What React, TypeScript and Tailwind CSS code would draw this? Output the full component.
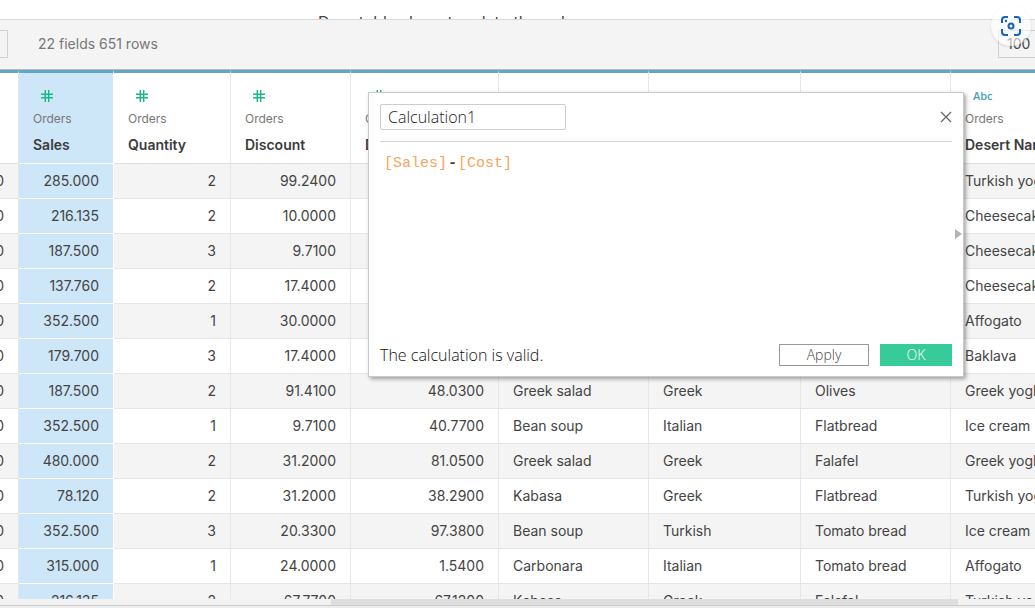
import React from "react";

type Column = { source: string; name: string; kind: "number" | "text" | "none"; width: string };

const columns: Column[] = [
  { source: "", name: "", kind: "none", width: "w-[51px]" },
  { source: "Orders", name: "Sales", kind: "number", width: "w-[95px]" },
  { source: "Orders", name: "Quantity", kind: "number", width: "w-[117px]" },
  { source: "Orders", name: "Discount", kind: "number", width: "w-[120px]" },
  { source: "Orders", name: "D", kind: "number", width: "w-[148px]" },
  { source: "", name: "", kind: "none", width: "w-[150px]" },
  { source: "", name: "", kind: "none", width: "w-[152px]" },
  { source: "", name: "", kind: "none", width: "w-[150px]" },
  { source: "Orders", name: "Desert Name", kind: "text", width: "w-[150px]" },
];

const rows: string[][] = [
  ["0", "285.000", "2", "99.2400", "", "", "", "", "Turkish yoghurt"],
  ["0", "216.135", "2", "10.0000", "", "", "", "", "Cheesecake"],
  ["0", "187.500", "3", "9.7100", "", "", "", "", "Cheesecake"],
  ["0", "137.760", "2", "17.4000", "", "", "", "", "Cheesecake"],
  ["0", "352.500", "1", "30.0000", "", "", "", "", "Affogato"],
  ["0", "179.700", "3", "17.4000", "", "", "", "", "Baklava"],
  ["0", "187.500", "2", "91.4100", "48.0300", "Greek salad", "Greek", "Olives", "Greek yoghurt"],
  ["0", "352.500", "1", "9.7100", "40.7700", "Bean soup", "Italian", "Flatbread", "Ice cream"],
  ["0", "480.000", "2", "31.2000", "81.0500", "Greek salad", "Greek", "Falafel", "Greek yoghurt"],
  ["0", "78.120", "2", "31.2000", "38.2900", "Kabasa", "Greek", "Flatbread", "Turkish yoghurt"],
  ["0", "352.500", "3", "20.3300", "97.3800", "Bean soup", "Turkish", "Tomato bread", "Ice cream"],
  ["0", "315.000", "1", "24.0000", "1.5400", "Carbonara", "Italian", "Tomato bread", "Affogato"],
  ["0", "216.135", "2", "67.7700", "67.1200", "Kabasa", "Greek", "Falafel", "Turkish yoghurt"],
];

function NumberIcon() {
  return (
    <svg width="12" height="12" viewBox="0 0 12 12" fill="none" stroke="#14b88a" strokeWidth="1.4" aria-hidden="true">
      <path d="M4.3 0v12M7.7 0v12M0 4.3h12M0 7.7h12" />
    </svg>
  );
}

function CaptureIcon() {
  return (
    <svg width="22" height="22" viewBox="0 0 22 22" fill="none" stroke="#1266bd" strokeWidth="2" aria-hidden="true">
      <path d="M2 8V5a3 3 0 0 1 3-3h3M14 2h3a3 3 0 0 1 3 3v3M20 14v3a3 3 0 0 1-3 3h-3M8 20H5a3 3 0 0 1-3-3v-3" />
      <circle cx="11" cy="11" r="2.5" />
      <circle cx="6" cy="6" r="1.2" fill="#1266bd" stroke="none" />
    </svg>
  );
}

function DataGrid() {
  return (
    <div className="min-h-0 flex-1 overflow-hidden">
      <table className="-ml-8 w-[1133px] table-fixed border-separate border-spacing-0 text-sm text-[#444]">
        <colgroup>
          {columns.map((c, i) => (
            <col key={i} className={c.width} />
          ))}
        </colgroup>
        <thead>
          <tr className="h-[94px]">
            {columns.map((c, i) => (
              <th
                key={i}
                className={`border-t-[3px] border-r border-b border-t-[#62a5c7] px-3.5 pt-2.5 text-left align-top font-normal whitespace-nowrap ${
                  i === 1 ? "border-r-white border-b-white bg-[#cde6f8]" : "border-r-[#e6e6e6] border-b-[#e0e0e0] bg-white"
                }`}
              >
                {c.kind !== "none" && (
                  <>
                    <span className="flex h-[26px] items-center pl-2 font-['Open_Sans',sans-serif] text-[11px] font-semibold text-[#4b9fbc]">
                      {c.kind === "number" ? <NumberIcon /> : "Abc"}
                    </span>
                    <span className="block text-xs leading-5 text-[#777]">{c.source}</span>
                    <span className="block pt-0.5 text-sm leading-7 font-semibold text-[#3c3c3c]">{c.name}</span>
                  </>
                )}
              </th>
            ))}
          </tr>
        </thead>
        <tbody>
          {rows.map((row, r) => (
            <tr key={r} className={`h-[35px] ${r % 2 === 0 ? "bg-[#f4f4f4]" : "bg-white"}`}>
              {row.map((value, i) => (
                <td
                  key={i}
                  className={`border-r border-b px-3.5 whitespace-nowrap ${i < 5 ? "text-right" : "text-left"} ${
                    i === 1 ? "border-white bg-[#cde6f8]" : "border-[#e6e6e6]"
                  }`}
                >
                  {value}
                </td>
              ))}
            </tr>
          ))}
        </tbody>
      </table>
    </div>
  );
}

function CalculationDialog() {
  return (
    <section
      role="dialog"
      aria-label="Calculation editor"
      className="absolute top-[92px] left-[368px] flex h-[285px] w-[596px] flex-col border border-[#c8c8c8] bg-white px-[11px] pb-2.5 font-['Open_Sans',sans-serif] shadow-[2px_2px_4px_rgba(0,0,0,0.35)]"
    >
      <header className="flex h-[49px] items-center justify-between border-b border-[#d4d4d4]">
        <input
          aria-label="Calculation name"
          defaultValue="Calculation1"
          className="h-[26px] w-[186px] rounded-xs border border-[#ccc] px-[7px] text-base font-light text-[#222] outline-none"
        />
        <button type="button" aria-label="Close">
          <svg width="12" height="12" viewBox="0 0 12 12" stroke="#666" strokeWidth="1.3" aria-hidden="true">
            <path d="M1 1l10 10M11 1L1 11" />
          </svg>
        </button>
      </header>
      <div className="flex-1 px-1 pt-3 font-['Liberation_Mono',monospace] text-[15px] leading-5 text-[#f6a55c]">
        [Sales]<span className="px-px font-bold text-[#444]">-</span>[Cost]
      </div>
      <button type="button" aria-label="Expand reference" className="absolute top-[136px] right-px">
        <svg width="7" height="10" viewBox="0 0 7 10" fill="#b3b3b3" aria-hidden="true">
          <path d="M0 0l7 5-7 5z" />
        </svg>
      </button>
      <footer className="flex h-[22px] items-center gap-[11px]">
        <p className="flex-1 text-base font-light text-[#111]">The calculation is valid.</p>
        <button type="button" className="h-[22px] w-[90px] border border-[#999] text-sm leading-5 font-light text-[#444]">
          Apply
        </button>
        <button type="button" className="h-[22px] w-[72px] bg-[#36cb98] text-sm leading-5 font-light text-white">
          OK
        </button>
      </footer>
    </section>
  );
}

export default function App() {
  return (
    <main className="relative flex h-screen flex-col overflow-hidden bg-white font-[Inter,sans-serif]">
      <div className="h-[19px] shrink-0 overflow-hidden pt-3 pl-[318px] text-base leading-5 whitespace-nowrap text-[#444]">
        Drag tables here to relate them. L
      </div>
      <div className="flex h-[51px] shrink-0 items-center justify-between border-y border-t-[#dadada] border-b-[#b8b8b8] bg-[#f4f4f4] pb-0.5">
        <div className="flex items-center gap-[30px]">
          <button type="button" aria-label="Options" className="h-7 w-2 border border-l-0 border-[#d0d0d0]" />
          <span className="text-sm text-[#777]">22 fields 651 rows</span>
        </div>
        <input
          aria-label="Row count"
          defaultValue="100"
          className="-mr-3 h-7 w-[49px] border border-[#d0d0d0] px-2 text-sm text-[#444] outline-none"
        />
      </div>
      <DataGrid />
      <div className="flex h-[7px] shrink-0 border-b border-[#ccc] bg-[#f2f2f2] pl-[32%]">
        <div className="w-[89%] bg-[#dedede]" />
      </div>
      <div className="h-[2px] shrink-0 bg-[#ededed]" />
      <CalculationDialog />
      <button
        type="button"
        aria-label="Visual search"
        className="absolute top-1.5 right-1 flex size-10 items-center justify-center rounded-full bg-white/60 shadow-sm"
      >
        <CaptureIcon />
      </button>
    </main>
  );
}
